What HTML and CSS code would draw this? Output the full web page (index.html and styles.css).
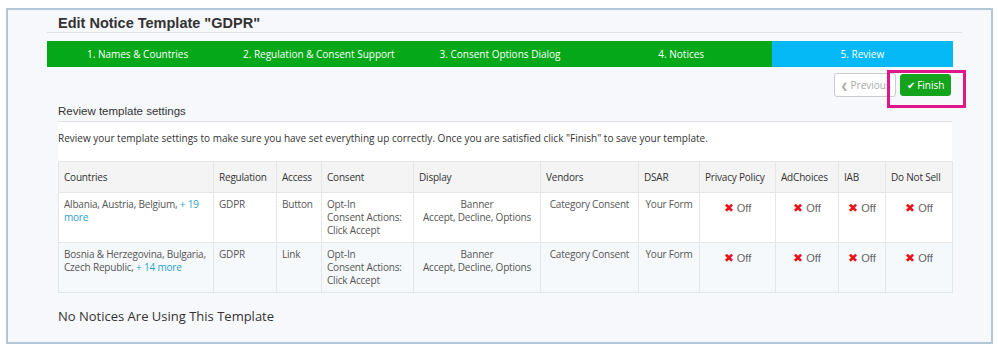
FILE: index.html
```html
<!DOCTYPE html>
<html lang="en">
<head>
    <meta charset="UTF-8">
    <meta name="viewport" content="width=device-width, initial-scale=1.0">
    <title>Edit Notice Template</title>
    <link rel="stylesheet" href="styles.css">
</head>
<body>
    <div class="frame">
        <!-- page title -->
        <div class="page-head">
            <h1>Edit Notice Template "GDPR"</h1>
        </div>

        <!-- wizard steps -->
        <div class="steps">
            <div class="step">1. Names &amp; Countries</div>
            <div class="step">2. Regulation &amp; Consent Support</div>
            <div class="step">3. Consent Options Dialog</div>
            <div class="step">4. Notices</div>
            <div class="step active">5. Review</div>
        </div>

        <div class="actions">
            <button class="btn btn-prev"><span class="chev">&#10094;</span> Previous</button>
            <button class="btn btn-finish"><span class="tick">&#10004;</span> Finish</button>
            <div class="highlight"></div>
        </div>

        <!-- review panel -->
        <div class="panel">
            <div class="panel-heading">Review template settings</div>
            <div class="panel-body">Review your template settings to make sure you have set everything up correctly. Once you are satisfied click "Finish" to save your template.</div>
            <table class="review">
                <colgroup>
                    <col style="width:155px">
                    <col style="width:63px">
                    <col style="width:45px">
                    <col style="width:92px">
                    <col style="width:127px">
                    <col style="width:98px">
                    <col style="width:61px">
                    <col style="width:76px">
                    <col style="width:63px">
                    <col style="width:47px">
                    <col style="width:67px">
                </colgroup>
                <thead>
                    <tr>
                        <th>Countries</th>
                        <th>Regulation</th>
                        <th>Access</th>
                        <th>Consent</th>
                        <th>Display</th>
                        <th>Vendors</th>
                        <th>DSAR</th>
                        <th>Privacy Policy</th>
                        <th>AdChoices</th>
                        <th>IAB</th>
                        <th>Do Not Sell</th>
                    </tr>
                </thead>
                <tbody>
                    <tr>
                        <td>Albania, Austria, Belgium, <a href="#">+ 19 more</a></td>
                        <td>GDPR</td>
                        <td>Button</td>
                        <td>Opt-In<br>Consent Actions:<br>Click Accept</td>
                        <td class="center">Banner<br>Accept, Decline, Options</td>
                        <td class="center">Category Consent</td>
                        <td class="center">Your Form</td>
                        <td class="off"><span class="x">&#10006;</span> Off</td>
                        <td class="off"><span class="x">&#10006;</span> Off</td>
                        <td class="off"><span class="x">&#10006;</span> Off</td>
                        <td class="off"><span class="x">&#10006;</span> Off</td>
                    </tr>
                    <tr>
                        <td>Bosnia &amp; Herzegovina, Bulgaria, Czech Republic, <a href="#">+ 14 more</a></td>
                        <td>GDPR</td>
                        <td>Link</td>
                        <td>Opt-In<br>Consent Actions:<br>Click Accept</td>
                        <td class="center">Banner<br>Accept, Decline, Options</td>
                        <td class="center">Category Consent</td>
                        <td class="center">Your Form</td>
                        <td class="off"><span class="x">&#10006;</span> Off</td>
                        <td class="off"><span class="x">&#10006;</span> Off</td>
                        <td class="off"><span class="x">&#10006;</span> Off</td>
                        <td class="off"><span class="x">&#10006;</span> Off</td>
                    </tr>
                </tbody>
            </table>
            <h2 class="no-notices">No Notices Are Using This Template</h2>
        </div>
    </div>
</body>
</html>
```

FILE: styles.css
```css
* {
    margin: 0;
    padding: 0;
    box-sizing: border-box;
}

body {
    font-family: 'Open Sans', 'Liberation Sans', sans-serif;
    background: #fff;
    color: #555;
}

/* outer frame */
.frame {
    margin: 8px 5px 0 6px;
    height: 336px;
    border: 2px solid #b3c7d6;
    background: #f7f8fb;
    padding: 0 29px 0 39px;
}

.page-head {
    border-bottom: 1px solid #dcdfe3;
    padding: 5px 0 0 11px;
    height: 23px;
}

.page-head h1 {
    font-family: 'Liberation Sans', Arial, sans-serif;
    font-size: 14.5px;
    font-weight: bold;
    color: #333;
    line-height: 16px;
}

/* wizard steps */
.steps {
    display: flex;
    width: 906px;
    margin-top: 8px;
    height: 26px;
    background: #04a818;
}

.step {
    flex: 1;
    color: #fff;
    font-size: 10px;
    line-height: 26px;
    text-align: center;
}

.step.active {
    background: #05b9f7;
}

/* buttons */
.actions {
    position: relative;
    width: 906px;
    display: flex;
    justify-content: flex-end;
    align-items: flex-start;
    gap: 4px;
    padding-top: 6px;
    padding-right: 2px;
    height: 37px;
}

.btn {
    font-family: 'Open Sans', sans-serif;
    font-size: 10px;
    border-radius: 3px;
    padding: 0 6px;
    cursor: pointer;
}

.btn-prev {
    width: 62px;
    height: 24px;
    background: #fff;
    border: 1px solid #ccc;
    color: #aaa;
    text-align: left;
    overflow: hidden;
    white-space: nowrap;
}

.chev {
    font-size: 8px;
    font-weight: bold;
}

.btn-finish {
    width: 51px;
    height: 22px;
    margin-top: 1px;
    background: #14a31c;
    border: 1px solid #14a31c;
    color: #fff;
    padding: 0 4px;
}

.tick {
    font-size: 10px;
}

.highlight {
    position: absolute;
    left: 840px;
    top: 3px;
    width: 79px;
    height: 38px;
    border: 3px solid #e0168c;
}

/* review panel */
.panel {
    margin-left: 11px;
    width: 894px;
}

.panel-heading {
    font-family: 'Liberation Sans', Arial, sans-serif;
    font-size: 11.5px;
    color: #333;
    height: 18px;
    line-height: 14px;
    border-bottom: 1px solid #dfe2e6;
}

.panel-body {
    background: #fff;
    font-size: 10px;
    line-height: 14px;
    color: #333;
    padding-top: 9px;
    height: 39px;
}

.review {
    width: 894px;
    border-collapse: collapse;
    table-layout: fixed;
    font-size: 10px;
    letter-spacing: -0.2px;
    background: #fff;
}

.review th,
.review td {
    border: 1px solid #e4e6e8;
    text-align: left;
    vertical-align: top;
    padding: 5px 5px 4px;
    line-height: 13px;
    font-weight: normal;
    color: #555;
}

.review th {
    background: #f4f4f4;
    color: #333;
    height: 31px;
    vertical-align: middle;
    padding-top: 5px;
    padding-bottom: 5px;
}

.review tbody tr {
    height: 50px;
}

.review tbody tr:nth-child(2) {
    background: #f5f9fc;
}

.review td.center {
    text-align: center;
}

.review td.off {
    text-align: center;
    padding-top: 9px;
    font-family: 'Liberation Sans', Arial, sans-serif;
    font-size: 11px;
    letter-spacing: 0;
    color: #666;
}

.x {
    color: #e8141b;
    font-size: 12px;
}

.review a {
    color: #2ba3c7;
    text-decoration: none;
}

.no-notices {
    font-size: 13px;
    font-weight: normal;
    color: #333;
    margin-top: 14px;
}
```
